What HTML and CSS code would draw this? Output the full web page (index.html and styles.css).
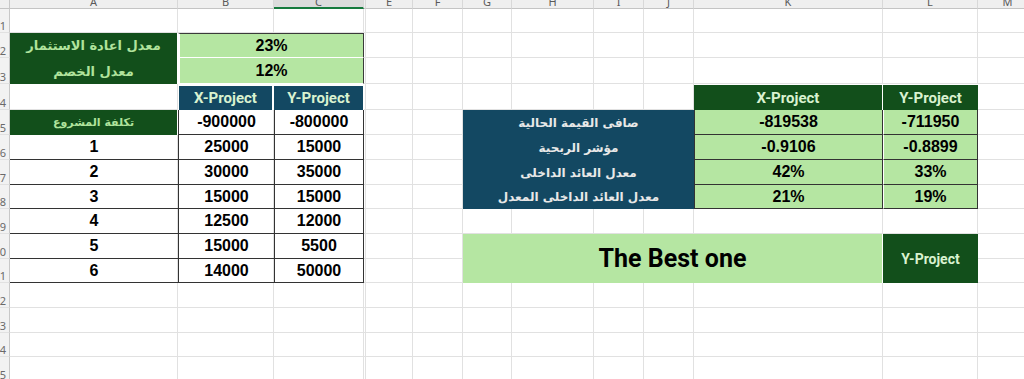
FILE: index.html
```html
<!DOCTYPE html>
<html lang="en">
<head>
<meta charset="utf-8">
<title>Sheet</title>
<link rel="stylesheet" href="styles.css">
</head>
<body>
<div class="sheet">
  <div class="bg">
    <div class="corner"></div><div class="ch"><span>A</span></div><div class="ch"><span>B</span></div><div class="ch sel"><span>C</span></div><div class="ch"></div><div class="ch"><span>E</span></div><div class="ch"><span>F</span></div><div class="ch"><span>G</span></div><div class="ch"><span>H</span></div><div class="ch"><span>I</span></div><div class="ch"><span>J</span></div><div class="ch"><span>K</span></div><div class="ch"><span>L</span></div><div class="ch"><span>M</span></div>
    <div class="rh"><span>1</span></div><i></i><i></i><i></i><i></i><i></i><i></i><i></i><i></i><i></i><i></i><i></i><i></i><i></i>
    <div class="rh"><span>2</span></div><i></i><i></i><i></i><i></i><i></i><i></i><i></i><i></i><i></i><i></i><i></i><i></i><i></i>
    <div class="rh"><span>3</span></div><i></i><i></i><i></i><i></i><i></i><i></i><i></i><i></i><i></i><i></i><i></i><i></i><i></i>
    <div class="rh"><span>4</span></div><i></i><i></i><i></i><i></i><i></i><i></i><i></i><i></i><i></i><i></i><i></i><i></i><i></i>
    <div class="rh"><span>5</span></div><i></i><i></i><i></i><i></i><i></i><i></i><i></i><i></i><i></i><i></i><i></i><i></i><i></i>
    <div class="rh"><span>6</span></div><i></i><i></i><i></i><i></i><i></i><i></i><i></i><i></i><i></i><i></i><i></i><i></i><i></i>
    <div class="rh"><span>7</span></div><i></i><i></i><i></i><i></i><i></i><i></i><i></i><i></i><i></i><i></i><i></i><i></i><i></i>
    <div class="rh"><span>8</span></div><i></i><i></i><i></i><i></i><i></i><i></i><i></i><i></i><i></i><i></i><i></i><i></i><i></i>
    <div class="rh"><span>9</span></div><i></i><i></i><i></i><i></i><i></i><i></i><i></i><i></i><i></i><i></i><i></i><i></i><i></i>
    <div class="rh"><span>10</span></div><i></i><i></i><i></i><i></i><i></i><i></i><i></i><i></i><i></i><i></i><i></i><i></i><i></i>
    <div class="rh"><span>11</span></div><i></i><i></i><i></i><i></i><i></i><i></i><i></i><i></i><i></i><i></i><i></i><i></i><i></i>
    <div class="rh"><span>12</span></div><i></i><i></i><i></i><i></i><i></i><i></i><i></i><i></i><i></i><i></i><i></i><i></i><i></i>
    <div class="rh"><span>13</span></div><i></i><i></i><i></i><i></i><i></i><i></i><i></i><i></i><i></i><i></i><i></i><i></i><i></i>
    <div class="rh"><span>14</span></div><i></i><i></i><i></i><i></i><i></i><i></i><i></i><i></i><i></i><i></i><i></i><i></i><i></i>
    <div class="rh"><span>15</span></div><i></i><i></i><i></i><i></i><i></i><i></i><i></i><i></i><i></i><i></i><i></i><i></i><i></i>
  </div>

  <div class="fg">
    <!-- Left block -->
    <div class="cell dg cA r23 stack">
      <span class="ar big" dir="rtl" lang="ar">معدل اعادة الاستثمار</span>
      <span class="ar big" dir="rtl" lang="ar">معدل الخصم</span>
    </div>
    <div class="cell lg cBC r2 rate top">23%</div>
    <div class="cell lg cBC r3 rate">12%</div>

    <div class="cell teal cB r4 hd hb">X-Project</div>
    <div class="cell teal cC r4 hd hc">Y-Project</div>

    <div class="cell dg cA r5 ar small" dir="rtl" lang="ar">تكلفة المشروع</div>
    <div class="cell cB r5 num bl bb">-900000</div>
    <div class="cell cC r5 num bl br bb">-800000</div>

    <div class="cell cA r6 num bb">1</div>
    <div class="cell cB r6 num bl bb">25000</div>
    <div class="cell cC r6 num bl br bb">15000</div>
    <div class="cell cA r7 num bb">2</div>
    <div class="cell cB r7 num bl bb">30000</div>
    <div class="cell cC r7 num bl br bb">35000</div>
    <div class="cell cA r8 num bb">3</div>
    <div class="cell cB r8 num bl bb">15000</div>
    <div class="cell cC r8 num bl br bb">15000</div>
    <div class="cell cA r9 num bb">4</div>
    <div class="cell cB r9 num bl bb">12500</div>
    <div class="cell cC r9 num bl br bb">12000</div>
    <div class="cell cA r10 num bb">5</div>
    <div class="cell cB r10 num bl bb">15000</div>
    <div class="cell cC r10 num bl br bb">5500</div>
    <div class="cell cA r11 num bb">6</div>
    <div class="cell cB r11 num bl bb">14000</div>
    <div class="cell cC r11 num bl br bb">50000</div>

    <!-- Right block -->
    <div class="cell dg cK r4 hd hk">X-Project</div>
    <div class="cell dg cL r4 hd hl">Y-Project</div>

    <div class="cell teal cGJ r5 ar lbl" dir="rtl" lang="ar">صافى القيمة الحالية</div>
    <div class="cell lg cK r5 num vk">-819538</div>
    <div class="cell lg cL r5 num vl">-711950</div>

    <div class="cell teal cGJ r6 ar lbl" dir="rtl" lang="ar">مؤشر الربحية</div>
    <div class="cell lg cK r6 num vk">-0.9106</div>
    <div class="cell lg cL r6 num vl">-0.8899</div>

    <div class="cell teal cGJ r7 ar lbl" dir="rtl" lang="ar">معدل العائد الداخلى</div>
    <div class="cell lg cK r7 num vk">42%</div>
    <div class="cell lg cL r7 num vl">33%</div>

    <div class="cell teal cGJ r8 ar lbl" dir="rtl" lang="ar">معدل العائد الداخلى المعدل</div>
    <div class="cell lg cK r8 num vk">21%</div>
    <div class="cell lg cL r8 num vl">19%</div>

    <div class="cell lg cGK r1011 best">The Best one</div>
    <div class="cell dg cL r1011 hd winner">Y-Project</div>
  </div>
</div>
</body>
</html>
```

FILE: styles.css
```css
* { box-sizing: border-box; }

html, body {
  margin: 0;
  padding: 0;
  background: #ffffff;
  overflow: hidden;
}

body {
  width: 1024px;
  height: 379px;
  font-family: "Liberation Sans", Arial, sans-serif;
  color: #000;
}

.sheet {
  display: grid;
}

.bg,
.fg {
  grid-area: 1 / 1;
  display: grid;
  grid-template-columns: 10px 168px 96px 90px 2px 47px 50px 49px 82px 50px 50px 189px 95px 60px;
  grid-template-rows: 9px 24px 25px 26px 26px 25px 25px 25px 24px 25px 25px 24px 25px 25px 24px 25px;
}

/* ---------- background grid ---------- */
.bg i {
  display: block;
  border-right: 1px solid #e1e1e1;
  border-bottom: 1px solid #e1e1e1;
}

.corner {
  background: #efefef;
  border-right: 1px solid #c8c8c8;
  border-bottom: 1px solid #c4c4c4;
}

.ch {
  background: #efefef;
  border-right: 1px solid #d8d8d8;
  border-bottom: 1px solid #c4c4c4;
  overflow: hidden;
  text-align: center;
  font-family: "Noto Sans", "Liberation Sans", sans-serif;
  font-size: 11px;
  color: #5a5a5a;
}

.ch span {
  display: block;
  line-height: 11px;
  margin-top: -4px;
}

.ch.sel {
  background: #dcdcdc;
  border-bottom: 2px solid #177a3e;
}

.rh {
  background: #f2f2f2;
  border-right: 1px solid #c8c8c8;
  border-bottom: 1px solid #e1e1e1;
  overflow: hidden;
  display: flex;
  justify-content: flex-end;
  align-items: flex-end;
  padding-right: 3px;
  padding-bottom: 1px;
  font-family: "Noto Sans", "Liberation Sans", sans-serif;
  font-size: 11px;
  color: #6a6a6a;
}

.rh span {
  line-height: 11px;
  white-space: nowrap;
}

/* ---------- placement ---------- */
.cA { grid-column: 2; }
.cB { grid-column: 3; }
.cC { grid-column: 4; }
.cK { grid-column: 12; }
.cL { grid-column: 13; }
.cBC { grid-column: 3 / 5; }
.cGJ { grid-column: 8 / 12; }
.cGK { grid-column: 8 / 13; }

.r2 { grid-row: 3; }
.r3 { grid-row: 4; }
.r4 { grid-row: 5; }
.r5 { grid-row: 6; }
.r6 { grid-row: 7; }
.r7 { grid-row: 8; }
.r8 { grid-row: 9; }
.r9 { grid-row: 10; }
.r10 { grid-row: 11; }
.r11 { grid-row: 12; }
.r23 { grid-row: 3 / 5; }
.r1011 { grid-row: 11 / 13; }

/* ---------- cells ---------- */
.cell {
  display: flex;
  align-items: center;
  justify-content: center;
  white-space: nowrap;
  overflow: hidden;
}

.dg { background: #124f1b; }
.lg { background: #b5e6a2; }
.teal { background: #134862; }

.stack {
  flex-direction: column;
  align-items: stretch;
  border-right: 1px solid #ffffff;
}

.stack span {
  flex: 1;
  display: flex;
  align-items: center;
  justify-content: center;
}

.ar {
  font-family: "DejaVu Sans", sans-serif;
  font-weight: bold;
}

.dg.ar, .stack .ar { color: #b0e39c; }

.big { font-size: 13px; }
.small { font-size: 11px; border-right: 1px solid #ffffff; }

.lbl {
  color: #e8e8e8;
  font-size: 12px;
}

.num,
.rate {
  font-family: "Liberation Sans", Arial, sans-serif;
  font-weight: bold;
  font-size: 16px;
}

.rate {
  border-left: 2px solid #ffffff;
  border-right: 1px solid #3a3a3a;
  border-bottom: 1px solid #ffffff;
}

.rate.top {
  border-top: 1px solid #3a3a3a;
}

.hd {
  font-family: Roboto, "Liberation Sans", sans-serif;
  font-weight: bold;
  font-size: 15px;
  color: #d9f2d0;
}

.hb {
  border-top: 2px solid #ffffff;
  border-left: 1px solid #ffffff;
  border-right: 2px solid #ffffff;
}

.hc {
  border-top: 2px solid #ffffff;
  border-right: 1px solid #ffffff;
}

.hk {
  border-top: 1px solid #ffffff;
  border-right: 1px solid #ffffff;
}

.hl {
  border-top: 1px solid #ffffff;
}

.bl { border-left: 1px solid #333333; }
.br { border-right: 1px solid #333333; }
.bb { border-bottom: 1px solid #333333; }

.vk {
  border-left: 1px solid #333333;
  border-right: 1px solid #333333;
  border-bottom: 1px solid #333333;
}

.vl {
  border-left: 1px solid #ffffff;
  border-right: 1px solid #333333;
  border-bottom: 1px solid #333333;
}

.best {
  font-family: Roboto, "Liberation Sans", sans-serif;
  font-weight: bold;
  font-size: 25px;
  color: #000;
  border-right: 1px solid #ffffff;
}

.winner {
  font-size: 14px;
}
```
